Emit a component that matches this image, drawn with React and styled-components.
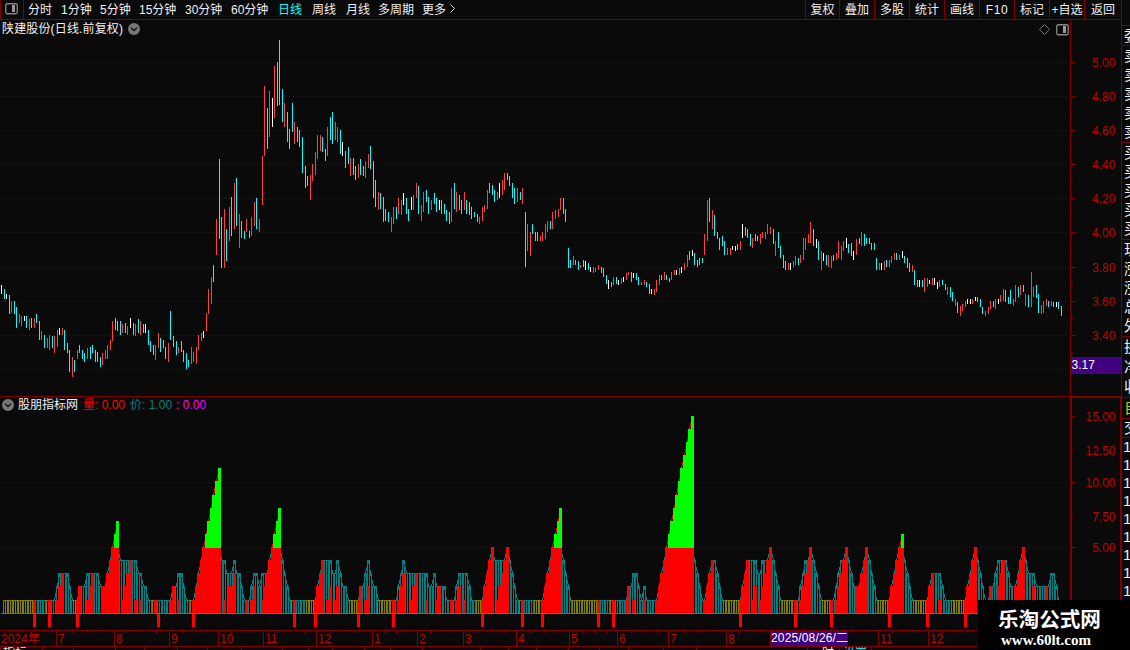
import React from 'react';
import styled, { createGlobalStyle } from 'styled-components';

const GlobalStyle = createGlobalStyle`
  * {
    box-sizing: border-box;
  }
  body {
    margin: 0;
    background: #0a0a0a;
    overflow: hidden;
  }
`;

const LINE = '#800000';
const LABEL = '#c00000';
const GRID = '#6e0a08';
const FONT = '"Liberation Sans", "Noto Sans CJK SC", sans-serif';

// One entry per trading day: top-bottom and colour (r = up, c = down, w = flat)
const CANDLES = `
285-294w 289-299c 294-299w 295-314c 301-313r 301-314c 307-328c 314-323r 316-326r 316-321w 316-328c 319-330r 318-328c 318-328r 314-323c 321-340c 331-340r
335-348c 338-348r 335-350r 336-348c 336-353r 330-347r 328-335w 328-335r 330-350c 343-353c 350-372c 357-377r 360-372c 350-359r 345-353c 350-359c 353-362c
348-359r 347-359c 345-353c 350-362c 352-362c 357-367c 353-365r 350-359r 345-359r 340-350r 321-341r 318-330c 321-331c 321-335c 324-333r 323-333c 326-335r
318-328w 323-335c 324-336r 319-333c 321-335r 324-333c 324-333w 330-345c 341-352c 345-355c 345-360r 333-348r 338-352c 340-348c 347-359c 343-362r 311-340c
336-347c 341-355c 347-353r 341-352c 350-362c 353-369c 360-367c 347-364r 352-362r 347-364r 335-350r 333-341r 331-338w 313-331r 289-314r 277-304r 265-282c
219-255r 159-239c 217-268c 209-268r 229-261c 207-241r 197-236c 183-229r 178-226c 214-248r 221-238c 231-239c 219-232r 231-238c 217-236r 202-226r 198-229c
219-232r 156-205r 86-156r 108-149c 91-137r 98-127w 66-118r 62-106c 40-105c 89-122c 103-127r 112-142c 129-149c 103-132c 122-144r 127-142c 130-147c
137-173c 166-188c 176-186c 175-200r 164-181r 152-175r 135-159r 135-151r 137-152c 149-161c 127-156r 117-140c 112-144c 122-140r 127-142r 130-154c 142-156w
151-168c 147-164c 158-176r 158-175c 166-180c 164-178r 159-175c 166-176c 161-178r 154-168r 146-169c 161-198c 180-207c 192-210r 193-209c 197-222c 209-221c
212-222c 217-232r 207-224r 207-219c 198-214r 200-215r 193-205w 198-214c 209-221c 197-210w 195-210r 183-198r 186-214c 205-221r 192-212r 190-202c 197-214c
200-210r 193-204c 198-212c 200-210w 200-214c 204-214c 210-221c 212-224c 188-222r 183-209c 192-212r 195-210c 200-214c 192-210r 200-214c 202-215c 207-219c
212-217c 214-222c 217-224r 207-221r 205-212r 190-209r 183-193c 185-195c 190-202c 192-200r 183-198w 180-195r 173-190r 173-180c 176-186c 183-198c 188-204c
188-202r 192-200c 188-204r 212-267c 224-251r 232-256r 224-234c 232-241c 232-241c 236-241r 232-241r 224-239r 221-232r 221-229c 212-229r 210-219r 209-217r
198-210r 198-214c 209-222c 248-268c 260-268c 256-265r 260-265c 261-270c 265-268r 260-267c 261-270w 263-270c 267-272w 267-273r 268-272r 265-270r 267-273c
268-277c 275-284c 280-289w 282-287c 277-285r 277-284c 280-285w 278-284r 277-282w 273-280r 272-275r 272-282c 273-278w 273-280c 277-285c 282-285r 280-285r
282-287c 284-294c 289-294w 289-295r 280-292r 275-285r 275-280c 272-280r 275-280c 278-282c 272-280r 270-275r 270-275w 268-275r 267-273w 263-270r 255-267r
251-260c 250-256w 253-265c 260-267c 258-265c 258-263c 234-255r 200-241r 198-222c 210-229r 215-236c 232-239c 238-250c 236-246c 241-255c 248-255r 248-255r
246-250w 246-251w 244-250c 241-250r 224-238w 227-236c 229-238c 234-246c 238-248r 234-241c 236-241c 234-244r 232-238r 232-239r 224-234r 227-234r 229-244c
241-256r 232-248c 246-258c 255-268c 261-270c 263-270r 263-270w 261-267r 256-265r 258-265c 255-263r 238-260r 238-250r 234-243r 222-243r 229-246c 239-248w
241-260c 251-270r 253-261w 255-265c 255-267r 256-268r 255-261c 253-260r 241-258r 246-260r 241-251r 238-248w 244-253c 243-256c 251-260w 239-255r 238-244c
232-246r 234-246c 238-244c 238-244c 243-250c 243-250c 258-270c 263-270r 263-270w 261-270r 260-267c 260-267r 256-263r 253-260r 253-260c 255-260r 251-258w
256-263c 258-268c 263-272c 265-272r 270-285c 280-287c 280-287w 280-287c 278-292r 278-287r 280-284w 278-285r 278-285w 282-289w 280-287r 280-285c 284-290c
287-295r 287-297c 292-301c 299-306r 302-313c 306-316r 304-311r 301-307r 299-304w 299-304w 299-304r 297-301w 297-302c 299-307c 307-314c 311-316r 307-314r
301-309r 301-307c 299-309r 299-304w 295-302r 289-301r 290-302c 297-304c 290-304c 299-306r 285-302r 287-297c 285-295r 285-292c 294-306r 295-307c 272-307r
287-297r 285-298c 294-313c 305-314r 301-313r 299-306r 301-307c 301-306r 302-307c 302-307w 302-309c 306-316c
`.trim().split(/\s+/).map((item) => {
  const [top, rest] = item.split('-');
  return { top: Number(top), bottom: parseInt(rest, 10), color: rest.slice(-1) };
});

const parseHex = (rows) => rows.join('').split('').map((c) => parseInt(c, 16));

// Height of the outlined column, one hex digit per day
const LEVELS = parseHex([
  '01111111111111111', '11111233332111222', '33333222345674444', '44433221111111111',
  '22332111123456789', 'ab443334332111233', '23334567843211111', '11111123444433432',
  '21111122343221111', '11112343333333332', '23222211112333321', '11112345444445432',
  '11111111111234567', '84321111111111111', '11111111112233212', '1111123456789abcd',
  'ef432112344321111', '11112344443344454', '32111111112344543', '21111112344543222',
  '34543211111123456', '43211111112333321', '11111111234543211', '22344443222345433',
  '322222233210',
]);

// Height of the filled column
const COUNTS = parseHex([
  '00000000000001000', '00100123000001200', '12300022345670123', '40101000001000001',
  '20100000123456789', 'ab010223000010120', '01234567800000100', '00000123401201200',
  '00000120120000000', '00101230012300010', '00120000101201000', '00012345012345000',
  '00100000001234567', '80000000000000010', '00001000012010001', '0000123456789abcd',
  'ef000012340000000', '00012340120123450', '00000000101234500', '00000101234500022',
  '34500000000123456', '00000000012300100', '00000001234500000', '20023400002345000',
  '200002000000',
]);

// Quiet days are drawn in olive, listed as x ranges
const QUIET = [
  [3, 32], [46, 48], [73, 75], [152, 156], [190, 192], [291, 293], [306, 313], [349, 356],
  [377, 392], [476, 480], [519, 521], [534, 541], [572, 596], [610, 612], [723, 738],
  [782, 794], [822, 829], [878, 887], [913, 925], [951, 963],
];

const SIGNALS = [
  34, 49, 77, 158, 193, 294, 315, 358, 393, 482, 522, 542, 598, 613, 740, 795, 831, 889, 927, 965,
];

const PRICE_LABELS = [
  ['5.00', 62], ['4.80', 96], ['4.60', 130], ['4.40', 164], ['4.20', 198],
  ['4.00', 232], ['3.80', 267], ['3.60', 301], ['3.40', 335],
];
const VALUE_LABELS = [
  ['15.00', 416], ['12.50', 450], ['10.00', 482], ['7.50', 516], ['5.00', 547],
];

const MONTHS = [
  [0, '2024年'], [56, '7'], [114, '8'], [169, '9'], [218, '10'], [263, '11'], [316, '12'],
  [372, '1'], [417, '2'], [463, '3'], [516, '4'], [569, '5'], [617, '6'], [668, '7'],
  [726, '8'], [770, ''], [878, '11'], [928, '12'], [978, ''],
];

const TABS = [
  0, 42, 73, 115, 144, 177, 207, 241, 282, 308, 332, 364, 390, 422, 480, 508, 536, 568,
  599, 628, 663, 696, 807, 839, 871,
];

const PERIODS = [
  ['分时', 33], ['1分钟', 39], ['5分钟', 39], ['15分钟', 46], ['30分钟', 46], ['60分钟', 47],
  ['日线', 34], ['周线', 34], ['月线', 32], ['多周期', 44], ['更多', 27],
];
const ACTIONS = [
  ['复权', 34], ['叠加', 35], ['多股', 35], ['统计', 35], ['画线', 35], ['F10', 35],
  ['标记', 35], ['+自选', 35], ['返回', 37],
];

const QUOTE_GROUPS = [
  { height: 20, rows: ['委'] },
  { height: 97, rows: ['卖', '卖', '卖', '卖', '卖'] },
  { height: 97, rows: ['买', '买', '买', '买', '买'] },
  { height: 97, rows: ['现', '涨', '涨', '总', '外'] },
  { height: 61, rows: ['换', '净', '收'] },
  { height: 21, rows: ['自'], color: '#c8c800' },
  { height: 19, rows: ['交'] },
];

const dayX = (i) => 1 + Math.round(i * 2.52955);
const levelY = (v) => (v === 0 ? 613 : Math.floor(613.2 - 13.13 * v));

const Screen = styled.div`
  display: flex;
  position: relative;
  width: 1130px;
  height: 650px;
  overflow: hidden;
  background: #0a0a0a;
  color: #f0f0f0;
  font: 12px/14px ${FONT};
  white-space: pre;
`;

const Main = styled.div`
  width: 1122px;
  flex: none;
`;

const Toolbar = styled.div`
  display: flex;
  height: 20px;
  border-bottom: 1px solid ${LINE};
  border-right: 1px solid ${LINE};
`;

const PanelToggle = styled.div`
  width: 24px;
  padding: 3px 0 0 4px;
  border: solid ${LINE};
  border-width: 0 1px;
`;

const Periods = styled.div`
  display: flex;
  flex: 1;
  padding: 3px 0 0 4px;
`;

const Period = styled.span`
  width: ${(p) => p.$width}px;
  color: ${(p) => (p.$active ? '#00ffff' : 'inherit')};
`;

const Action = styled.div`
  display: flex;
  justify-content: center;
  width: ${(p) => p.$width}px;
  padding-top: 3px;
  border-left: 1px solid ${LINE};
  letter-spacing: ${(p) => (p.$wide ? '0.6px' : 'normal')};
`;

const ChartRow = styled.div`
  display: flex;
  position: relative;
  height: ${(p) => p.$height}px;
  border-bottom: ${(p) => (p.$divider ? `1px solid ${LINE}` : 'none')};

  svg {
    display: block;
  }
`;

const ChartTitle = styled.div`
  display: flex;
  position: absolute;
  top: ${(p) => p.$top}px;
  left: 2px;
  align-items: center;
`;

const StockName = styled.span`
  margin-right: 5px;
  letter-spacing: 0.15px;
`;

const ChartTools = styled.div`
  display: flex;
  position: absolute;
  top: 4px;
  right: 53px;
  gap: 6px;
`;

const Reading = styled.span`
  color: ${(p) => p.$color};
  margin-left: ${(p) => p.$gap || 4}px;
`;

const Axis = styled.div`
  width: 52px;
  border: solid ${LINE};
  border-width: ${(p) => (p.$boxed ? '1px 2px 0 2px' : '0 1px')};
`;

const Timeline = styled.div`
  position: relative;
  display: flex;
  height: 17px;
  border: solid ${LINE};
  border-width: 1px 0;
  color: ${LABEL};
`;

const Month = styled.div`
  position: relative;
  flex: none;
  display: flex;
  width: ${(p) => p.$width}px;
  padding-left: 1px;
  border-left: ${(p) => (p.$first ? 'none' : `1px solid ${LINE}`)};
  line-height: 16px;
`;

const MonthTicks = styled.svg`
  position: absolute;
  top: 0;
  left: 0;
`;

const CursorDate = styled.div`
  width: 77px;
  height: 15px;
  margin-left: -1px;
  background: #400080;
  color: #fff;
  line-height: 14px;
  letter-spacing: 0.15px;
`;

const Footer = styled.div`
  display: flex;
  position: relative;
  height: 3px;
  overflow: hidden;
  padding-left: 3px;
  line-height: 12px;
`;

const FooterTicks = styled.svg`
  position: absolute;
  top: 0;
  left: 0;
`;

const FooterItem = styled.span`
  width: ${(p) => p.$width}px;
  color: ${(p) => p.$color || 'inherit'};
`;

const Quotes = styled.div`
  width: 8px;
  padding-top: 25px;
  overflow: hidden;
`;

const QuoteGroup = styled.div`
  display: flex;
  flex-direction: column;
  justify-content: space-around;
  height: ${(p) => p.$height}px;
  padding-left: 2px;
  border-top: 1px solid ${LINE};
  color: ${(p) => p.$color || 'inherit'};
  font-size: 15px;
  line-height: 18px;
`;

const Trades = styled.div`
  padding-left: 1px;
  border-top: 1px solid ${LINE};
  font-size: 15px;
  line-height: 18px;
`;

const Watermark = styled.div`
  position: absolute;
  right: 0;
  bottom: 0;
  width: 152px;
  height: 50px;
  padding: 7px 0 0 20px;
  background: #000;
  color: #fff;
`;

const SiteName = styled.div`
  margin-bottom: 2px;
  font: bold 20.6px/22px "Noto Sans CJK SC", sans-serif;
`;

const SiteUrl = styled.div`
  padding-left: 3px;
  font: bold 15px/18px "Liberation Serif", serif;
`;

const PanelIcon = () => (
  <svg width="13" height="12">
    <rect x="0.75" y="0.75" width="11.5" height="10" rx="1.5" fill="none" stroke="#888" strokeWidth="1.3" />
    <rect x="7" y="2" width="3" height="7" fill="#999" />
  </svg>
);

const DropIcon = () => (
  <svg width="12" height="12">
    <circle cx="6" cy="6" r="6" fill="#777" />
    <path d="M3 4.8L6 7.6L9 4.8" fill="none" stroke="#111" strokeWidth="1.3" />
  </svg>
);

function DottedLine({ y }) {
  return (
    <line x1="1" x2="1066" y1={y + 0.5} y2={y + 0.5} stroke={GRID} strokeDasharray="1 3" />
  );
}

function PriceChart() {
  const colors = { r: '#ff4040', c: '#00ffff', w: '#ffffff' };
  return (
    <svg width="1070" height="376" viewBox="0 20 1070 376" shapeRendering="crispEdges">
      {[...PRICE_LABELS.map(([, y]) => y), 369].map((y) => <DottedLine key={y} y={y} />)}
      {CANDLES.map((c, i) => (
        <rect key={i} x={dayX(i)} y={c.top} width="1" height={c.bottom - c.top} fill={colors[c.color]} />
      ))}
    </svg>
  );
}

function IndicatorChart() {
  const isQuiet = (x) => QUIET.some(([from, to]) => x >= from && x <= to);
  return (
    <svg width="1070" height="233" viewBox="0 397 1070 233" shapeRendering="crispEdges">
      <DottedLine y={482} />
      <DottedLine y={547} />
      {LEVELS.map((v, i) => v > 0 && (
        <rect
          key={i}
          x={dayX(i) - 0.5}
          y={levelY(v) + 0.5}
          width="2"
          height={613 - levelY(v)}
          fill="none"
          stroke={isQuiet(dayX(i)) ? '#808000' : '#008080'}
        />
      ))}
      {LEVELS.slice(1, -1).map((v, k) => {
        const i = k + 1;
        const next = LEVELS[i + 1];
        // a falling edge starts from the threshold at most
        const from = next < v ? Math.min(v, 5) : v;
        return v !== next && next > 0 && (
          <line
            key={i}
            x1={dayX(i) + 0.5}
            y1={levelY(from) + 0.5}
            x2={dayX(i + 1) + 0.5}
            y2={levelY(next) + 0.5}
            stroke={next > 5 ? '#ff0000' : '#008080'}
          />
        );
      })}
      {COUNTS.map((v, i) => v > 0 && (
        <rect key={i} x={dayX(i) - 1} y={levelY(Math.min(v, 5))} width="3" height={613 - levelY(Math.min(v, 5))} fill="#ff0000" />
      ))}
      {COUNTS.map((v, i) => v > 5 && (
        <rect key={i} x={dayX(i) - 1} y={levelY(v)} width="3" height={548 - levelY(v)} fill="#00ff00" />
      ))}
      {SIGNALS.map((x) => (
        <rect key={x} x={x - 1} y="614" width="3" height="13" fill="#ff0000" />
      ))}
      <rect x="1" y="613" width="1061" height="1" fill="#ff00ff" />
    </svg>
  );
}

function PriceAxis() {
  return (
    <Axis>
      <svg width="50" height="376" viewBox="1071 20 50 376" shapeRendering="crispEdges">
        {PRICE_LABELS.map(([label, y]) => (
          <g key={label} fill={LABEL}>
            <rect x="1071" y={y} width="5" height="1" fill={LINE} />
            <rect x="1071" y={y + 17} width="2" height="1" fill={LINE} />
            <text x="1092" y={y + 5}>{label}</text>
          </g>
        ))}
        <rect x="1071" y="357" width="50" height="17" fill={LINE} />
        <rect x="1071" y="358" width="50" height="15" fill="#400080" />
        <text x="1071.5" y="369" fill="#fff">3.17</text>
      </svg>
    </Axis>
  );
}

function ValueAxis() {
  return (
    <Axis $boxed>
      <svg width="48" height="232" viewBox="1072 398 48 232" shapeRendering="crispEdges">
        {VALUE_LABELS.map(([label, y], i) => (
          <g key={label} fill={LABEL}>
            <rect x="1072" y={y} width={i % 2 ? 1 : 4} height="1" fill={LINE} />
            <text x="1115.5" y={y + 5} textAnchor="end">{label}</text>
          </g>
        ))}
      </svg>
    </Axis>
  );
}

function DateAxis() {
  return (
    <Timeline>
      {MONTHS.slice(0, -1).map(([x, label], i) => {
        const width = MONTHS[i + 1][0] - x;
        return (
          <Month key={x} $width={width} $first={i === 0}>
            <MonthTicks width={width} height="2" shapeRendering="crispEdges">
              {x > 0 && [0.25, 0.5, 0.75].map((t) => (
                <rect key={t} x={Math.round(width * t)} width="1" height="2" fill={LINE} />
              ))}
            </MonthTicks>
            {label || <CursorDate>2025/08/26/二</CursorDate>}
          </Month>
        );
      })}
    </Timeline>
  );
}

function App() {
  return (
    <>
      <GlobalStyle />
      <Screen>
        <Main>
          <Toolbar>
            <PanelToggle><PanelIcon /></PanelToggle>
            <Periods>
              {PERIODS.map(([name, width]) => (
                <Period key={name} $width={width} $active={name === '日线'}>{name}</Period>
              ))}
              <svg width="8" height="12">
                <path d="M1.5 1.5L5.5 5.5L1.5 9.5" fill="none" stroke="#ddd" />
              </svg>
            </Periods>
            {ACTIONS.map(([name, width]) => (
              <Action key={name} $width={width} $wide={name === 'F10'}>{name}</Action>
            ))}
          </Toolbar>

          <ChartRow $height={377} $divider>
            <PriceChart />
            <PriceAxis />
            <ChartTitle $top={2}>
              <StockName>陕建股份(日线.前复权)</StockName>
              <DropIcon />
            </ChartTitle>
            <ChartTools>
              <svg width="11" height="11">
                <path d="M5.5 0.5L10.5 5.5L5.5 10.5L0.5 5.5Z" fill="none" stroke="#777" />
              </svg>
              <PanelIcon />
            </ChartTools>
          </ChartRow>

          <ChartRow $height={233}>
            <IndicatorChart />
            <ValueAxis />
            <ChartTitle $top={1}>
              <DropIcon />
              <Reading $color="#f0f0f0">股朋指标网</Reading>
              <Reading $color="#ff0000" $gap={5}>量: 0.00</Reading>
              <Reading $color="#008080" $gap={5}>价: 1.00</Reading>
              <Reading $color="#ff00ff">: 0.00</Reading>
            </ChartTitle>
          </ChartRow>

          <DateAxis />
          <Footer>
            <FooterTicks width="978" height="3" shapeRendering="crispEdges">
              {TABS.map((x) => <rect key={x} x={x} width="1" height="3" fill={LINE} />)}
            </FooterTicks>
            <FooterItem $width={819}>指标</FooterItem>
            <FooterItem $width={21}>时</FooterItem>
            <FooterItem $color="#00ffff">设置</FooterItem>
          </Footer>
        </Main>

        <Quotes>
          {QUOTE_GROUPS.map((group) => (
            <QuoteGroup key={group.rows[0]} $height={group.height} $color={group.color}>
              {group.rows.map((text, i) => <span key={i}>{text}</span>)}
            </QuoteGroup>
          ))}
          <Trades>
            {Array.from({ length: 9 }, (_, i) => <div key={i}>1</div>)}
          </Trades>
        </Quotes>

        <Watermark>
          <SiteName>乐淘公式网</SiteName>
          <SiteUrl>www.60lt.com</SiteUrl>
        </Watermark>
      </Screen>
    </>
  );
}

export default App;
